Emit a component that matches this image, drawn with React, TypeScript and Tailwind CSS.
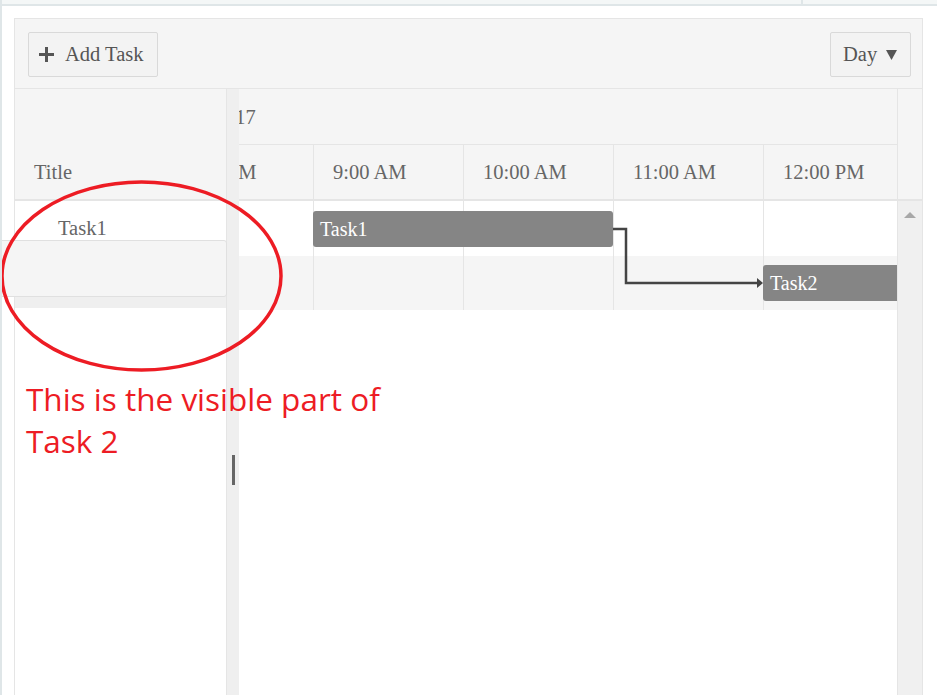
import React from "react";

const slots = ["8:00 AM", "9:00 AM", "10:00 AM", "11:00 AM", "12:00 PM"];

function PlusIcon() {
  return (
    <svg width="15" height="15" viewBox="0 0 15 15">
      <rect x="6" y="0" width="3" height="15" fill="#555" />
      <rect x="0" y="6" width="15" height="3" fill="#555" />
    </svg>
  );
}

export default function App() {
  return (
    <div
      className="relative w-[937px] h-[695px] overflow-hidden bg-white border-l-2 border-[#dfe6e8] flex flex-col text-[#666]"
      style={{ fontFamily: '"Liberation Serif", "Times New Roman", serif' }}
    >
      {/* top strip */}
      <div className="h-[6px] shrink-0 bg-[#f4f7f7] border-b-2 border-[#dfe6e8] flex">
        <div className="w-[801px] h-full border-r-2 border-[#dfe6e8]" />
      </div>

      {/* gantt */}
      <div className="ml-[12px] mt-[12px] w-[909px] h-[720px] shrink-0 border border-[#e5e5e5] flex flex-col">
        {/* toolbar */}
        <div className="h-[70px] shrink-0 bg-[#f5f5f5] border-b border-[#e5e5e5] flex items-start justify-between pl-[13px] pr-[11px] pt-[13px]">
          <div className="w-[130px] h-[45px] border border-[#d9d9d9] rounded-[2px] bg-[#f3f3f3] flex items-center pl-[10px] gap-[11px] text-[20.5px] text-[#555]">
            <PlusIcon />
            <span>Add Task</span>
          </div>
          <div className="w-[81px] h-[45px] border border-[#d9d9d9] rounded-[2px] bg-[#f3f3f3] flex items-center pl-[12px] gap-[9px] text-[20.5px] text-[#555]">
            <span>Day</span>
            <svg width="11" height="10" viewBox="0 0 11 10">
              <polygon points="0,0 11,0 5.5,10" fill="#555" />
            </svg>
          </div>
        </div>

        {/* main */}
        <div className="flex flex-1 min-h-0">
          {/* left pane */}
          <div className="w-[212px] shrink-0 border-r border-[#e5e5e5] bg-white flex flex-col">
            <div className="h-[112px] shrink-0 bg-[#f5f5f5] border-b-2 border-[#e5e5e5] flex items-end pl-[19px] pb-[11px] text-[20.5px]">
              Title
            </div>
            <div className="h-[55px] flex items-center pl-[43px] text-[20.5px]">Task1</div>
            <div className="h-[52px] bg-[#efefef]" />
          </div>

          {/* splitter */}
          <div className="w-[12px] shrink-0 bg-[#efefef] flex flex-col">
            <div className="mt-[366px] ml-[5px] w-[3px] h-[30px] bg-[#666]" />
          </div>

          {/* timeline */}
          <div className="w-[658px] shrink-0 overflow-hidden bg-white">
            <div className="ml-[-76px] w-[760px] flex flex-col">
              <div className="h-[56px] bg-[#f5f5f5] border-b border-[#e5e5e5] flex items-center pl-[20px] pt-[2px] text-[20.5px]">
                Tue 1/17
              </div>
              <div className="h-[56px] bg-[#f5f5f5] border-b-2 border-[#e5e5e5] flex">
                {slots.map((s) => (
                  <div key={s} className="w-[150px] shrink-0 border-l border-[#e5e5e5] flex items-center pl-[19px] pt-[1px] text-[20.5px]">
                    {s}
                  </div>
                ))}
              </div>
              <div className="relative">
                <div className="h-[55px] bg-white flex">
                  {slots.map((s) => (
                    <div key={s} className="w-[150px] shrink-0 border-l border-[#e5e5e5]" />
                  ))}
                </div>
                <div className="h-[54px] bg-[#f5f5f5] flex">
                  {slots.map((s) => (
                    <div key={s} className="w-[150px] shrink-0 border-l border-[#e5e5e5]" />
                  ))}
                </div>
                {/* bars */}
                <div className="absolute left-[150px] top-[10px] w-[300px] h-[36px] bg-[#858585] rounded-[3px] flex items-center pl-[7px] text-white text-[20px]">
                  Task1
                </div>
                <div className="absolute left-[600px] top-[64px] w-[160px] h-[36px] bg-[#858585] rounded-[3px] flex items-center pl-[7px] text-white text-[20px]">
                  Task2
                </div>
                <svg className="absolute left-0 top-0 pointer-events-none" width="760" height="110">
                  <polyline points="450,28 463,28 463,82 594,82" fill="none" stroke="#444" strokeWidth="2.5" />
                  <polygon points="594,77 600,82 594,87" fill="#444" />
                </svg>
              </div>
            </div>
          </div>

          {/* scroll column */}
          <div className="w-[25px] shrink-0 border-l border-[#e5e5e5] flex flex-col">
            <div className="h-[112px] shrink-0 bg-[#f5f5f5] border-b-2 border-[#e5e5e5]" />
            <div className="flex-1 bg-[#f0f0f0] flex justify-center pt-[11px]">
              <svg width="12" height="6" viewBox="0 0 12 6">
                <polygon points="0,6 12,6 6,0" fill="#a8a8a8" />
              </svg>
            </div>
          </div>
        </div>
      </div>

      {/* dragged row */}
      <div className="absolute left-[-6px] top-[240px] w-[231px] h-[57px] bg-[#f5f5f5] border border-[#e0e0e0] rounded-[3px]" />

      {/* annotation */}
      <svg className="absolute left-[-2px] top-0 pointer-events-none" width="937" height="695">
        <ellipse cx="141.5" cy="276" rx="139.5" ry="94" fill="none" stroke="#ed1c24" strokeWidth="3.5" />
      </svg>
      <div
        className="absolute left-[24px] top-[378px] text-[31.5px] leading-[42px] text-[#ed1c24]"
        style={{ fontFamily: '"Open Sans", "Noto Sans", sans-serif' }}
      >
        This is the visible part of
        <br />
        Task 2
      </div>
    </div>
  );
}
